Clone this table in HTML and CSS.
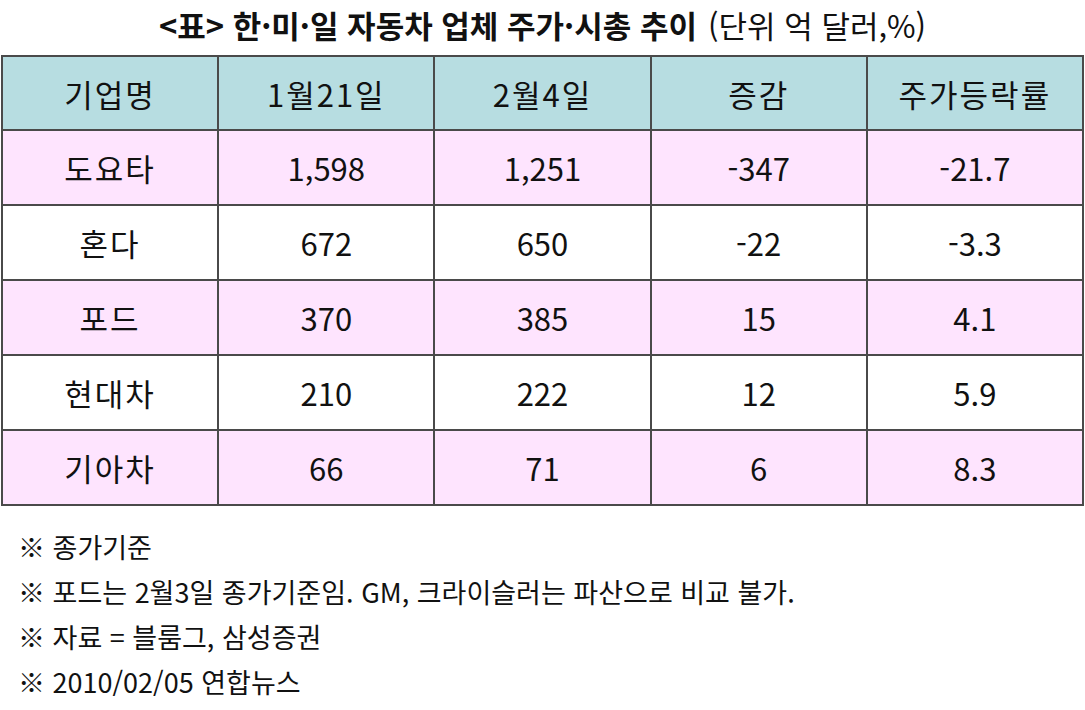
FILE: index.html
```html
<!DOCTYPE html>
<html lang="ko">
<head>
<meta charset="utf-8">
<link rel="stylesheet" href="styles.css">
</head>
<body>
<div class="page">
  <h1 class="title"><b>&lt;표&gt; 한·미·일 자동차 업체 주가·시총 추이</b> <span class="unit">(단위 억 달러,%)</span></h1>
  <table class="grid">
    <tr class="head"><td class="k">기업명</td><td class="k">1월21일</td><td class="k">2월4일</td><td class="k">증감</td><td class="k">주가등락률</td></tr>
    <tr class="pink"><td class="k">도요타</td><td>1,598</td><td>1,251</td><td>-347</td><td>-21.7</td></tr>
    <tr class="white"><td class="k">혼다</td><td>672</td><td>650</td><td>-22</td><td>-3.3</td></tr>
    <tr class="pink"><td class="k">포드</td><td>370</td><td>385</td><td>15</td><td>4.1</td></tr>
    <tr class="white"><td class="k">현대차</td><td>210</td><td>222</td><td>12</td><td>5.9</td></tr>
    <tr class="pink"><td class="k">기아차</td><td>66</td><td>71</td><td>6</td><td>8.3</td></tr>
  </table>
  <ul class="notes">
    <li>※ 종가기준</li>
    <li>※ 포드는 2월3일 종가기준임. GM, 크라이슬러는 파산으로 비교 불가.</li>
    <li>※ 자료 = 블룸그, 삼성증권</li>
    <li>※ 2010/02/05 연합뉴스</li>
  </ul>
</div>
</body>
</html>
```
FILE: styles.css
```css
html, body {
  margin: 0;
  padding: 0;
  background: #fff;
}
body {
  font-family: "Noto Sans CJK KR", "Noto Sans", sans-serif;
  color: #111;
}
.page {
  width: 1085px;
  height: 710px;
  overflow: hidden;
}
.title {
  margin: 0;
  height: 55px;
  padding-bottom: 6px;
  box-sizing: border-box;
  display: flex;
  align-items: center;
  justify-content: center;
  gap: 11px;
  font-size: 31px;
  font-weight: normal;
  letter-spacing: 0;
}
.title b {
  font-weight: 700;
}
.grid {
  margin-left: 1px;
  width: 1083px;
  border-collapse: collapse;
  table-layout: fixed;
}
.grid td {
  border: 2px solid #4a4a4a;
  height: 73px;
  padding: 0;
  text-align: center;
  vertical-align: middle;
  font-size: 31px;
  line-height: 1;
  color: #111;
}
.grid td.k {
  letter-spacing: 2px;
}
.head td {
  height: 72px;
  background: #b7dde1;
}
.pink td { background: #fee4fe; }
.white td { background: #fff; }
.notes {
  list-style: none;
  margin: 18px 0 0 0;
  padding: 0 0 0 18px;
  font-size: 27px;
}
.notes li {
  height: 45px;
  line-height: 45px;
  white-space: nowrap;
}
```
